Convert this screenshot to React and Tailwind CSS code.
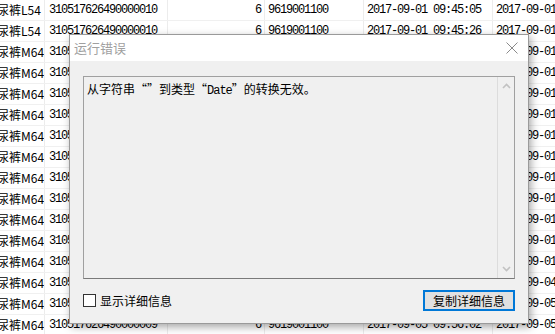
const rows = [
  { name: "尿裤L54", code: "310517626490000010", qty: "6", sku: "9619001100", t1: "2017-09-01 09:45:05", t2: "2017-09-01" },
  { name: "尿裤L54", code: "310517626490000010", qty: "6", sku: "9619001100", t1: "2017-09-01 09:45:26", t2: "2017-09-01" },
  ...Array.from({ length: 11 }, () => ({ name: "尿裤M64", code: "310517626490000010", qty: "6", sku: "9619001100", t1: "2017-09-01 09:50:12", t2: "2017-09-01" })),
  { name: "尿裤M64", code: "310517626490000010", qty: "6", sku: "9619001100", t1: "2017-09-04 09:51:20", t2: "2017-09-04" },
  { name: "尿裤M64", code: "310517626490000009", qty: "6", sku: "9619001100", t1: "2017-09-05 09:55:38", t2: "2017-09-05" },
  { name: "尿裤M64", code: "310517626490000009", qty: "6", sku: "9619001100", t1: "2017-09-05 09:56:02", t2: "2017-09-05" },
];

const mono = "font-['Liberation_Mono','Noto_Sans_CJK_SC',monospace] text-[12px] tracking-[-1.2px]";
const cjk = "font-['Noto_Sans_CJK_SC','Noto_Sans',sans-serif]";

function Table() {
  return (
    <div className="w-[555px] h-[334px] overflow-hidden bg-white text-black">
      {rows.map((r, idx) => (
        <div
          key={idx}
          className="grid grid-cols-[45px_123px_97px_99px_129px_62px] h-[21px] border-b border-[#f0f0f0] items-center whitespace-nowrap overflow-hidden"
        >
          <div className={`${cjk} text-[12px] h-full flex items-center border-r border-[#ececec] overflow-hidden`}>
            <span className="ml-[-3px]">{r.name}</span>
          </div>
          <div className={`${mono} pl-[4px] h-full flex items-center border-r border-[#ececec]`}>{r.code}</div>
          <div className={`${mono} pr-[3px] h-full flex items-center justify-end border-r border-[#ececec]`}>{r.qty}</div>
          <div className={`${mono} pl-[3px] h-full flex items-center border-r border-[#ececec]`}>{r.sku}</div>
          <div className={`${mono} pl-[3px] h-full flex items-center border-r border-[#ececec]`}>{r.t1}</div>
          <div className={`${mono} pl-[3px] h-full flex items-center`}>{r.t2}</div>
        </div>
      ))}
    </div>
  );
}

function Dialog() {
  return (
    <div className="absolute left-[69px] top-[34px] w-[460px] h-[290px] bg-[#f0f0f0] border border-[#9a9a9a] shadow-[2px_3px_8px_rgba(0,0,0,0.35)] flex flex-col">
      {/* title bar */}
      <div className="h-[26px] bg-white flex items-center justify-between pl-[4px] pr-[10px]">
        <span className={`${cjk} text-[13px] text-[#a0a0a0]`}>运行错误</span>
        <svg width="12" height="12" viewBox="0 0 12 12" className="text-[#8a8a8a]">
          <path d="M0.5 0.5 L11.5 11.5 M11.5 0.5 L0.5 11.5" stroke="currentColor" strokeWidth="1" fill="none" />
        </svg>
      </div>

      {/* body */}
      <div className="flex-1 flex flex-col px-[13px] pt-[15px] pb-[12px]">
        <div className="h-[203px] border border-[#a0a0a0] border-b-[#7a7a7a] flex bg-[#f0f0f0]">
          <div className={`${cjk} flex-1 text-[12px] text-black pl-[3px] pt-[3px] leading-[18px]`}>
            从字符串“”到类型“<span className="font-['Liberation_Mono',monospace] text-[12px] tracking-[-1px]">Date</span>”的转换无效。
          </div>
          <div className="w-[17px] border-l border-[#dcdcdc] flex flex-col justify-between items-center py-[6px]">
            <svg width="9" height="6" viewBox="0 0 9 6">
              <path d="M1 5 L4.5 1.5 L8 5" stroke="#c2c2c2" strokeWidth="1.6" fill="none" />
            </svg>
            <svg width="9" height="6" viewBox="0 0 9 6">
              <path d="M1 1 L4.5 4.5 L8 1" stroke="#c2c2c2" strokeWidth="1.6" fill="none" />
            </svg>
          </div>
        </div>

        <div className="mt-auto flex items-center justify-between">
          <label className="flex items-center gap-[4px]">
            <span className="w-[13px] h-[13px] border border-[#333] bg-white"></span>
            <span className={`${cjk} text-[12px] text-black`}>显示详细信息</span>
          </label>
          <button className={`${cjk} w-[92px] h-[21px] border-2 border-[#0078d7] bg-[#e1e1e1] text-[12px] text-black flex items-center justify-center`}>
            复制详细信息
          </button>
        </div>
      </div>
    </div>
  );
}

export default function App() {
  return (
    <div className="relative w-[555px] h-[334px] overflow-hidden">
      <Table />
      <Dialog />
    </div>
  );
}
